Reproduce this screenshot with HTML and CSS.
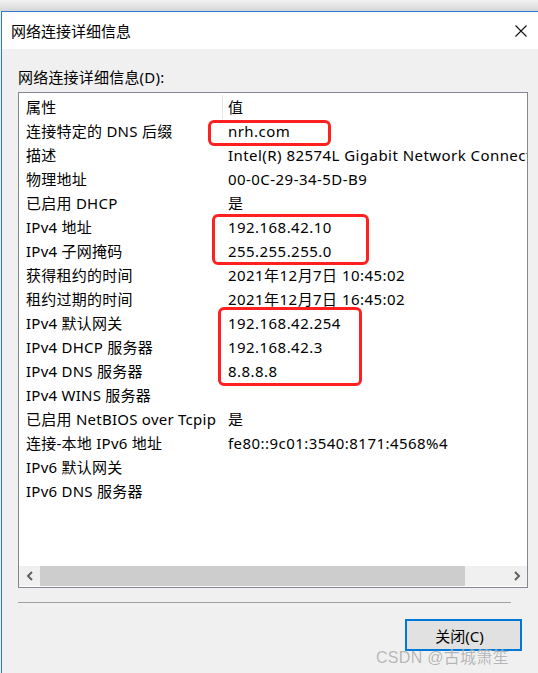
FILE: index.html
```html
<!DOCTYPE html>
<html lang="zh-CN">
<head>
    <meta charset="UTF-8">
    <title>网络连接详细信息</title>
    <link rel="stylesheet" href="styles.css">
</head>
<body>
<div class="shadow"></div>
<div class="window">
    <div class="titlebar">
        <span class="title">网络连接详细信息</span>
        <svg class="close" width="12" height="12" viewBox="0 0 12 12">
            <path d="M0.5 0.5 L11.5 11.5 M11.5 0.5 L0.5 11.5" stroke="#111" stroke-width="1.1" fill="none"/>
        </svg>
    </div>
    <div class="content">
        <div class="label">网络连接详细信息(D):</div>
        <div class="list">
            <div class="rows">
                <div class="row head"><span class="k">属性</span><span class="v">值</span></div>
                <div class="row"><span class="k">连接特定的 DNS 后缀</span><span class="v">nrh.com</span></div>
                <div class="row"><span class="k">描述</span><span class="v">Intel(R) 82574L Gigabit Network Connection</span></div>
                <div class="row"><span class="k">物理地址</span><span class="v">00-0C-29-34-5D-B9</span></div>
                <div class="row"><span class="k">已启用 DHCP</span><span class="v">是</span></div>
                <div class="row"><span class="k">IPv4 地址</span><span class="v">192.168.42.10</span></div>
                <div class="row"><span class="k">IPv4 子网掩码</span><span class="v">255.255.255.0</span></div>
                <div class="row"><span class="k">获得租约的时间</span><span class="v">2021年12月7日 10:45:02</span></div>
                <div class="row"><span class="k">租约过期的时间</span><span class="v">2021年12月7日 16:45:02</span></div>
                <div class="row"><span class="k">IPv4 默认网关</span><span class="v">192.168.42.254</span></div>
                <div class="row"><span class="k">IPv4 DHCP 服务器</span><span class="v">192.168.42.3</span></div>
                <div class="row"><span class="k">IPv4 DNS 服务器</span><span class="v">8.8.8.8</span></div>
                <div class="row"><span class="k">IPv4 WINS 服务器</span><span class="v"></span></div>
                <div class="row"><span class="k">已启用 NetBIOS over Tcpip</span><span class="v">是</span></div>
                <div class="row"><span class="k">连接-本地 IPv6 地址</span><span class="v">fe80::9c01:3540:8171:4568%4</span></div>
                <div class="row"><span class="k">IPv6 默认网关</span><span class="v"></span></div>
                <div class="row"><span class="k">IPv6 DNS 服务器</span><span class="v"></span></div>
            </div>
            <div class="hscroll">
                <div class="arrow">
                    <svg width="8" height="10" viewBox="0 0 8 10"><path d="M6 1 L2 5 L6 9" stroke="#606060" stroke-width="2" fill="none"/></svg>
                </div>
                <div class="track"><div class="thumb"></div></div>
                <div class="arrow">
                    <svg width="8" height="10" viewBox="0 0 8 10"><path d="M2 1 L6 5 L2 9" stroke="#606060" stroke-width="2" fill="none"/></svg>
                </div>
            </div>
            <div class="mark m1"></div>
            <div class="mark m2"></div>
            <div class="mark m3"></div>
        </div>
        <div class="sep"></div>
        <div class="buttons">
            <button class="btn">关闭(C)</button>
        </div>
    </div>
    <div class="watermark">CSDN @古城箫笙</div>
</div>
</body>
</html>
```

FILE: styles.css
```css
body{
    margin: 0;
    background: #f0f0f0;
    font-family: "Noto Sans", "Noto Sans CJK SC", sans-serif;
    font-size: 15px;
    color: #000;
    overflow: hidden;
}
.shadow{
    height: 11px;
    background: linear-gradient(#f2f2f2, #d6d6d6);
}
.window{
    margin-left: 1px;
    border-top: 1px solid #2a7ad2;
    border-left: 1px solid #2a7ad2;
    background: #f0f0f0;
    height: 661px;
    position: relative;
}
.titlebar{
    height: 37px;
    background: #fff;
    display: flex;
    align-items: center;
    justify-content: space-between;
    padding: 0 11px 0 9px;
}
.title{
    font-size: 15px;
}
.close{
    margin-top: 1px;
}
.content{
    padding-left: 16px;
}
.label{
    margin-top: 18px;
    line-height: 20px;
    height: 20px;
    letter-spacing: 0.2px;
}
.list{
    margin-top: 5px;
    width: 508px;
    height: 494px;
    border: 1px solid #828790;
    background: #fff;
    position: relative;
    overflow: hidden;
    display: flex;
    flex-direction: column;
}
.rows{
    flex: 1;
    padding-top: 2px;
    overflow: hidden;
}
.row{
    display: grid;
    grid-template-columns: 203px 1fr;
    height: 24px;
    line-height: 24px;
    white-space: nowrap;
}
.row .k{
    padding-left: 7px;
    overflow: hidden;
    letter-spacing: 0.25px;
}
.row .v{
    padding-left: 6px;
    overflow: hidden;
    letter-spacing: 0.45px;
}
.row.head .v{
    border-left: 1px solid #e5e5e5;
    padding-left: 5px;
}
.hscroll{
    height: 20px;
    background: #f0f0f0;
    display: flex;
    margin-bottom: 1px;
}
.arrow{
    width: 21px;
    display: flex;
    align-items: center;
    justify-content: center;
}
.track{
    flex: 1;
    padding-right: 41px;
}
.thumb{
    height: 100%;
    background: #cdcdcd;
}
.mark{
    position: absolute;
    border: 3px solid #ff2020;
    border-radius: 6px;
}
.m1{
    left: 189px;
    top: 27px;
    width: 117px;
    height: 20px;
}
.m2{
    left: 193px;
    top: 121px;
    width: 151px;
    height: 45px;
}
.m3{
    left: 199px;
    top: 214px;
    width: 138px;
    height: 73px;
}
.sep{
    margin-top: 14px;
    width: 493px;
    height: 1px;
    background: #a0a0a0;
}
.buttons{
    display: flex;
    margin-top: 16px;
    padding-left: 387px;
}
.btn{
    width: 117px;
    height: 32px;
    border: 2px solid #0078d7;
    background: #e1e1e1;
    font-family: "Noto Sans", "Noto Sans CJK SC", sans-serif;
    font-size: 15px;
    padding: 0 8px 0 0;
    color: #000;
}
.watermark{
    position: absolute;
    left: 374px;
    top: 632px;
    font-family: "Liberation Sans", "Noto Sans CJK SC", sans-serif;
    font-size: 16px;
    letter-spacing: 0.3px;
    color: rgba(150, 150, 150, 0.7);
    text-shadow: 0 0 1px rgba(255,255,255,0.8);
}
```
